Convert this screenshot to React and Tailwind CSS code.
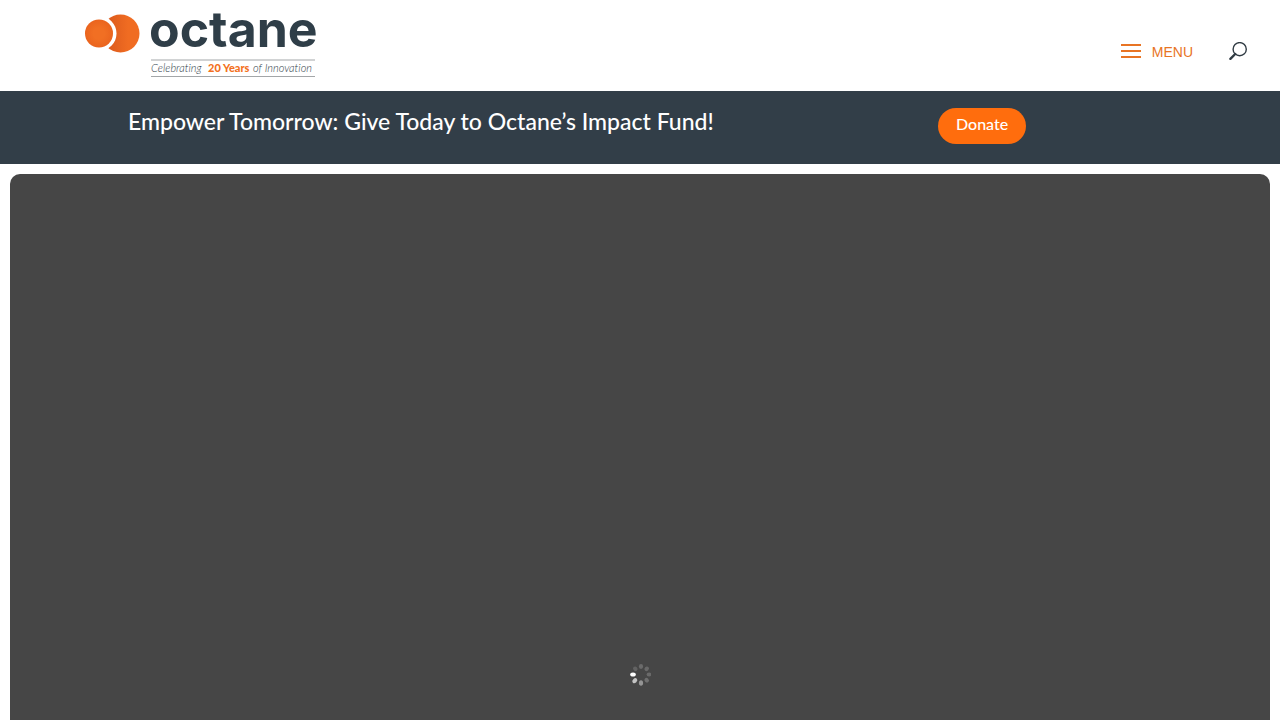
const dots = [
  [12, 2, '#6b6b6b'],
  [17.7, 4.3, '#696969'],
  [20, 10, '#6a6a6a'],
  [17.7, 15.7, '#6f6f6f'],
  [12, 18.5, '#949494'],
  [5.8, 16.2, '#c4c4c4'],
  [4, 10, '#ffffff'],
  [6.3, 4.3, '#626262'],
];

function Logo() {
  return (
    <a href="/" aria-label="Octane home" className="block">
      <svg width="240" height="78" viewBox="0 -10 240 78" className="block overflow-visible">
        <defs>
          <radialGradient id="left">
            <stop offset="0.4" stopColor="#f16f23" />
            <stop offset="1" stopColor="#ea641e" />
          </radialGradient>
          <linearGradient id="right">
            <stop offset="0.1" stopColor="#d9581c" />
            <stop offset="0.7" stopColor="#f06c22" />
          </linearGradient>
        </defs>
        <circle cx="36.5" cy="23.5" r="19" fill="url(#right)" />
        <circle cx="15" cy="23.5" r="17.5" fill="#fff" />
        <circle cx="15" cy="23.5" r="14" fill="url(#left)" />
        <text x="65" y="37" className="fill-[#2f3e48] font-['Inter',sans-serif] text-[50px] font-bold">octane</text>
        <path d="M67 50H231M67 66.5H231" stroke="#a3a6a8" />
        <text x="67" y="62" className="fill-[#2f3e48] font-['Lato',sans-serif] text-[11px] font-light italic [font-variant-ligatures:none]">Celebrating</text>
        <text x="124" y="62" className="fill-[#f37021] font-['Lato',sans-serif] text-[11px] font-black">20 Years</text>
        <text x="169" y="62" className="fill-[#2f3e48] font-['Lato',sans-serif] text-[11px] font-light italic [font-variant-ligatures:none]">of Innovation</text>
      </svg>
    </a>
  );
}

export default function App() {
  return (
    <div className="flex min-h-screen flex-col bg-white font-['Lato',sans-serif]">
      <header className="flex items-start justify-between pr-8 pb-[13px] pl-21">
        <Logo />
        <div className="flex items-center gap-9 pt-[42px]">
          <button type="button" className="flex items-center gap-2.5 font-['Liberation_Sans',Arial,sans-serif] text-sm text-[#e87424]">
            <svg width="22" height="16" viewBox="0 0 22 16" aria-hidden="true">
              <path d="M1 1H21M1 7H21M1 13H21" stroke="#e87424" strokeWidth="2" />
            </svg>
            MENU
          </button>
          <button type="button" aria-label="Search">
            <svg width="19" height="20" viewBox="1 0 19 20" fill="none" className="block" aria-hidden="true">
              <circle cx="11.7" cy="7.2" r="6.6" stroke="#303b43" strokeWidth="1.4" />
              <path d="M7.2 12L2.4 16.8" stroke="#303b43" strokeWidth="2.4" strokeLinecap="round" />
            </svg>
          </button>
        </div>
      </header>
      <section className="flex items-start bg-[#323e48] px-[10%] pt-4 pb-5 text-white">
        <h1 className="w-[79.1%] text-[23px] leading-7 font-medium">
          Empower Tomorrow: Give Today to Octane’s Impact Fund!
        </h1>
        <a href="/donate" className="mt-px flex h-9 items-center rounded-full bg-[#ff6d0d] px-[18px] pb-1 text-base font-medium">
          Donate
        </a>
      </section>
      <main className="flex grow flex-col px-2.5 pt-2.5">
        <div className="flex grow items-end justify-center rounded-t-[10px] bg-[#464646] pb-[34px]">
          <svg width="22" height="22" viewBox="0 0 22 22" role="img" aria-label="Loading">
            {dots.map(([x, y, color], i) => (
              <ellipse key={i} cx={x} cy={y + 0.5} rx={i > 3 && i < 7 ? 2.8 : 2.4} ry="2.1" fill={color} transform={`rotate(${i * 45 - 90} ${x} ${y + 0.5})`} />
            ))}
          </svg>
        </div>
      </main>
    </div>
  );
}
